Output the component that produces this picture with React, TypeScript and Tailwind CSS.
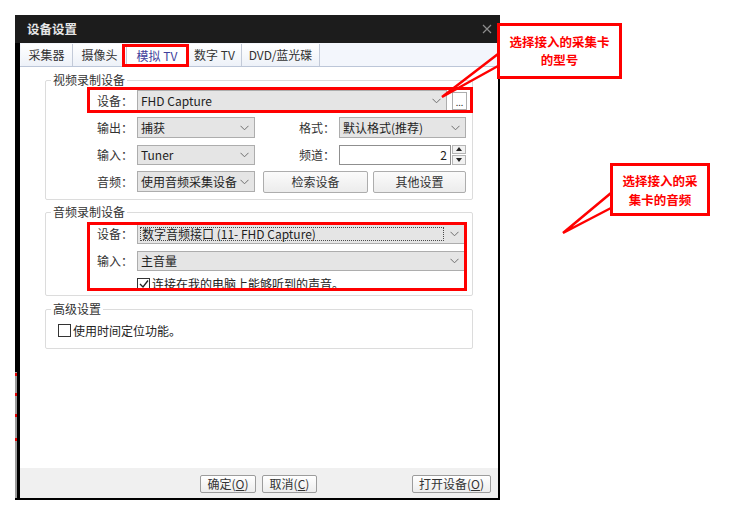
import React from "react";

const FONT = "font-['Noto_Sans_CJK_SC','Noto_Sans',sans-serif]";

function Chevron() {
  return (
    <svg width="9" height="6" viewBox="0 0 9 6" className="shrink-0">
      <path d="M0.5 0.8 L4.5 4.8 L8.5 0.8" fill="none" stroke="#6f6f6f" strokeWidth="1" />
    </svg>
  );
}

interface ComboProps {
  value: string;
  className: string;
  dotted?: boolean;
}

function Combo({ value, className, dotted }: ComboProps) {
  return (
    <div
      className={`flex items-center border border-[#adadad] bg-[#e5e5e5] text-[12px] leading-[14px] text-[#1e1e1e] ${className}`}
    >
      {dotted ? (
        <div className="flex-1 h-[calc(100%-4px)] ml-[2px] mr-[6px] border border-dotted border-[#4a4a4a] flex items-center pl-[1px]">
          {value}
        </div>
      ) : (
        <div className="flex-1 pl-[3px]">{value}</div>
      )}
      <div className="pr-[5px] flex items-center">
        <Chevron />
      </div>
    </div>
  );
}

function Label({ text, className = "w-[40px]" }: { text: string; className?: string }) {
  return <div className={`text-[12px] leading-[14px] text-[#333] ${className}`}>{text}</div>;
}

function Btn({ text, className }: { text: string; className: string }) {
  return (
    <div
      className={`flex items-center justify-center border border-[#adadad] rounded-[2px] bg-gradient-to-b from-[#fbfbfb] to-[#ececec] text-[12px] leading-[14px] text-[#333] ${className}`}
    >
      {text}
    </div>
  );
}

function Check({ checked }: { checked?: boolean }) {
  return (
    <div className="w-[13px] h-[13px] border border-[#333] bg-white flex items-center justify-center shrink-0">
      {checked && (
        <svg width="10" height="10" viewBox="0 0 10 10">
          <path d="M1 5 L4 8 L9 1.5" fill="none" stroke="#222" strokeWidth="1.3" />
        </svg>
      )}
    </div>
  );
}

function Group({ title, children, className }: { title: string; children: React.ReactNode; className: string }) {
  return (
    <fieldset className={`ml-[25px] w-[428px] border border-[#dcdcdc] rounded-[2px] ${className}`}>
      <legend className="ml-[5px] px-[2px] text-[12px] leading-[14px] text-[#333]">{title}</legend>
      {children}
    </fieldset>
  );
}

const tabs = [
  { name: "采集器", w: "w-[52px]" },
  { name: "摄像头", w: "w-[54px]" },
  { name: "模拟 TV", w: "w-[61px]", active: true },
  { name: "数字 TV", w: "w-[54px]" },
  { name: "DVD/蓝光碟", w: "w-[78px]" },
];

export default function App() {
  return (
    <div className={`relative w-[730px] h-[518px] bg-white overflow-hidden ${FONT}`}>
      <div className="ml-[15px] pt-[15px]">
        <div className="w-[485px] h-[485px] bg-black flex flex-col pb-[2px]">
          {/* title bar */}
          <div className="h-[28px] bg-[#1c1c1c] flex items-center justify-between pl-[12px] pr-[8px]">
            <span className="text-[12.5px] font-bold text-[#e6e6e6] leading-[14px]">设备设置</span>
            <svg width="10" height="10" viewBox="0 0 10 10">
              <path d="M1 1 L9 9 M9 1 L1 9" stroke="#8c8c8c" strokeWidth="1.2" />
            </svg>
          </div>

          <div className="flex-1 flex">
            {/* left edge */}
            <div className="w-[5px] flex">
              <div className="w-[2px] flex flex-col">
                <div className="h-[329px] bg-black" />
                <div className="flex-1 bg-[#9a9a9a] flex flex-col">
                  <div className="h-[3px] mt-[1px] bg-[#e00000]" />
                  <div className="h-[3px] mt-[17px] bg-[#e00000]" />
                  <div className="h-[3px] mt-[18px] bg-[#e00000]" />
                  <div className="h-[3px] mt-[21px] bg-[#e00000]" />
                </div>
              </div>
              <div className="w-[3px] bg-black" />
            </div>

            {/* dialog body */}
            <div className="w-[478px] bg-white flex flex-col">
              {/* tabs */}
              <div className="h-[24px] flex items-end bg-[#f3f6fc] border-b border-[#bcc6d8] pl-[1px]">
                {tabs.map((t) => (
                  <div
                    key={t.name}
                    className={`${t.w} h-[22px] flex items-center justify-center border-r border-[#c3cad8] text-[12px] leading-[14px] ${
                      t.active
                        ? "bg-white text-[#3e3e9c] -mb-px h-[23px]"
                        : "bg-gradient-to-b from-white to-[#edf1f8] text-[#333]"
                    }`}
                  >
                    {t.name}
                  </div>
                ))}
              </div>

              {/* content */}
              <div className="flex-1 flex flex-col">
                <Group title="视频录制设备" className="mt-[6px] pt-[3px] pb-[7px]">
                  <div className="flex flex-col gap-[6px] pl-[51px]">
                    <div className="flex items-center h-[21px]">
                      <Label text="设备：" />
                      <Combo value="FHD Capture" className="w-[310px] h-[21px]" />
                      <div className="ml-[5px] w-[15px] h-[18px] border border-[#adadad] bg-white flex items-end justify-center text-[9px] leading-[12px] text-[#333]">
                        ...
                      </div>
                    </div>
                    <div className="flex items-center h-[21px]">
                      <Label text="输出：" />
                      <Combo value="捕获" className="w-[118px] h-[21px]" />
                      <Label text="格式：" className="w-[40px] ml-[44px]" />
                      <Combo value="默认格式(推荐)" className="w-[127px] h-[21px]" />
                    </div>
                    <div className="flex items-center h-[21px]">
                      <Label text="输入：" />
                      <Combo value="Tuner" className="w-[118px] h-[20px]" />
                      <Label text="频道：" className="w-[40px] ml-[44px]" />
                      <div className="w-[112px] h-[20px] border border-[#8f8f8f] bg-white flex items-center justify-end pr-[3px] text-[12px] leading-[14px] text-[#222]">
                        2
                      </div>
                      <div className="ml-[1px] w-[14px] h-[20px] flex flex-col gap-[1px]">
                        <div className="flex-1 border border-[#b5b5b5] bg-[#f2f2f2] flex items-center justify-center">
                          <svg width="6" height="4" viewBox="0 0 6 4">
                            <path d="M0 4 L3 0 L6 4 Z" fill="#222" />
                          </svg>
                        </div>
                        <div className="flex-1 border border-[#b5b5b5] bg-[#f2f2f2] flex items-center justify-center">
                          <svg width="6" height="4" viewBox="0 0 6 4">
                            <path d="M0 0 L3 4 L6 0 Z" fill="#222" />
                          </svg>
                        </div>
                      </div>
                    </div>
                    <div className="flex items-center h-[21px]">
                      <Label text="音频：" />
                      <Combo value="使用音频采集设备" className="w-[118px] h-[21px]" />
                      <Btn text="检索设备" className="ml-[8px] w-[105px] h-[22px]" />
                      <Btn text="其他设置" className="ml-[5px] w-[93px] h-[22px]" />
                    </div>
                  </div>
                </Group>

                <Group title="音频录制设备" className="mt-[5px] pt-[5px] pb-[4px]">
                  <div className="flex flex-col pl-[51px]">
                    <div className="flex items-center h-[20px]">
                      <Label text="设备：" />
                      <Combo value="数字音频接口 (11- FHD Capture)" className="w-[328px] h-[20px]" dotted />
                    </div>
                    <div className="flex items-center h-[20px] mt-[7px]">
                      <Label text="输入：" />
                      <Combo value="主音量" className="w-[328px] h-[20px]" />
                    </div>
                    <div className="flex items-center h-[14px] mt-[6px] pl-[40px]">
                      <Check checked />
                      <span className="ml-[2px] text-[12px] leading-[14px] text-[#222]">连接在我的电脑上能够听到的声音。</span>
                    </div>
                  </div>
                </Group>

                <Group title="高级设置" className="mt-[6px] pt-[8px] pb-[11px]">
                  <div className="flex items-center h-[13px] pl-[12px]">
                    <Check />
                    <span className="ml-[2px] text-[12px] leading-[14px] text-[#222]">使用时间定位功能。</span>
                  </div>
                </Group>
              </div>

              {/* footer */}
              <div className="h-[30px] bg-[#f0f0f0] flex items-start pt-[7px] pr-[7px]">
                <Btn text="" className="hidden" />
                <div className="ml-[180px] w-[56px] h-[18px] flex items-center justify-center border border-[#9c9c9c] rounded-[2px] bg-gradient-to-b from-white to-[#ededed] text-[12px] leading-[14px] text-[#333]">
                  确定(<span className="underline">O</span>)
                </div>
                <div className="ml-[6px] w-[55px] h-[18px] flex items-center justify-center border border-[#9c9c9c] rounded-[2px] bg-gradient-to-b from-white to-[#ededed] text-[12px] leading-[14px] text-[#333]">
                  取消(<span className="underline">C</span>)
                </div>
                <div className="ml-auto w-[79px] h-[18px] flex items-center justify-center border border-[#9c9c9c] rounded-[2px] bg-gradient-to-b from-white to-[#ededed] text-[12px] leading-[14px] text-[#333]">
                  打开设备(<span className="underline">O</span>)
                </div>
              </div>
            </div>

            <div className="w-[2px] bg-black" />
          </div>
        </div>
      </div>

      {/* annotations */}
      <svg className="absolute left-0 top-0" width="730" height="518" viewBox="0 0 730 518">
        <polyline points="498,54 442,97 498,66" fill="none" stroke="#ff0000" strokeWidth="2.5" />
        <polyline points="611,193 563,233 611,208" fill="none" stroke="#ff0000" strokeWidth="2.5" />
      </svg>
      <div className="absolute left-[122px] top-[44px] w-[67px] h-[23px] border-[3px] border-[#ff0000]" />
      <div className="absolute left-[87px] top-[87px] w-[386px] h-[26px] border-[3px] border-[#ff0000]" />
      <div className="absolute left-[87px] top-[222px] w-[380px] h-[69px] border-[3px] border-[#ff0000]" />
      <div className="absolute left-[497px] top-[23px] w-[125px] h-[56px] border-[3px] border-[#ff0000] bg-white flex flex-col items-center justify-center text-[12.5px] leading-[18px] font-bold text-[#ff0000]">
        <span>选择接入的采集卡</span>
        <span>的型号</span>
      </div>
      <div className="absolute left-[610px] top-[163px] w-[100px] h-[53px] border-[3px] border-[#ff0000] bg-white flex flex-col items-center justify-center text-[12.5px] leading-[19px] font-bold text-[#ff0000]">
        <span>选择接入的采</span>
        <span>集卡的音频</span>
      </div>
    </div>
  );
}
